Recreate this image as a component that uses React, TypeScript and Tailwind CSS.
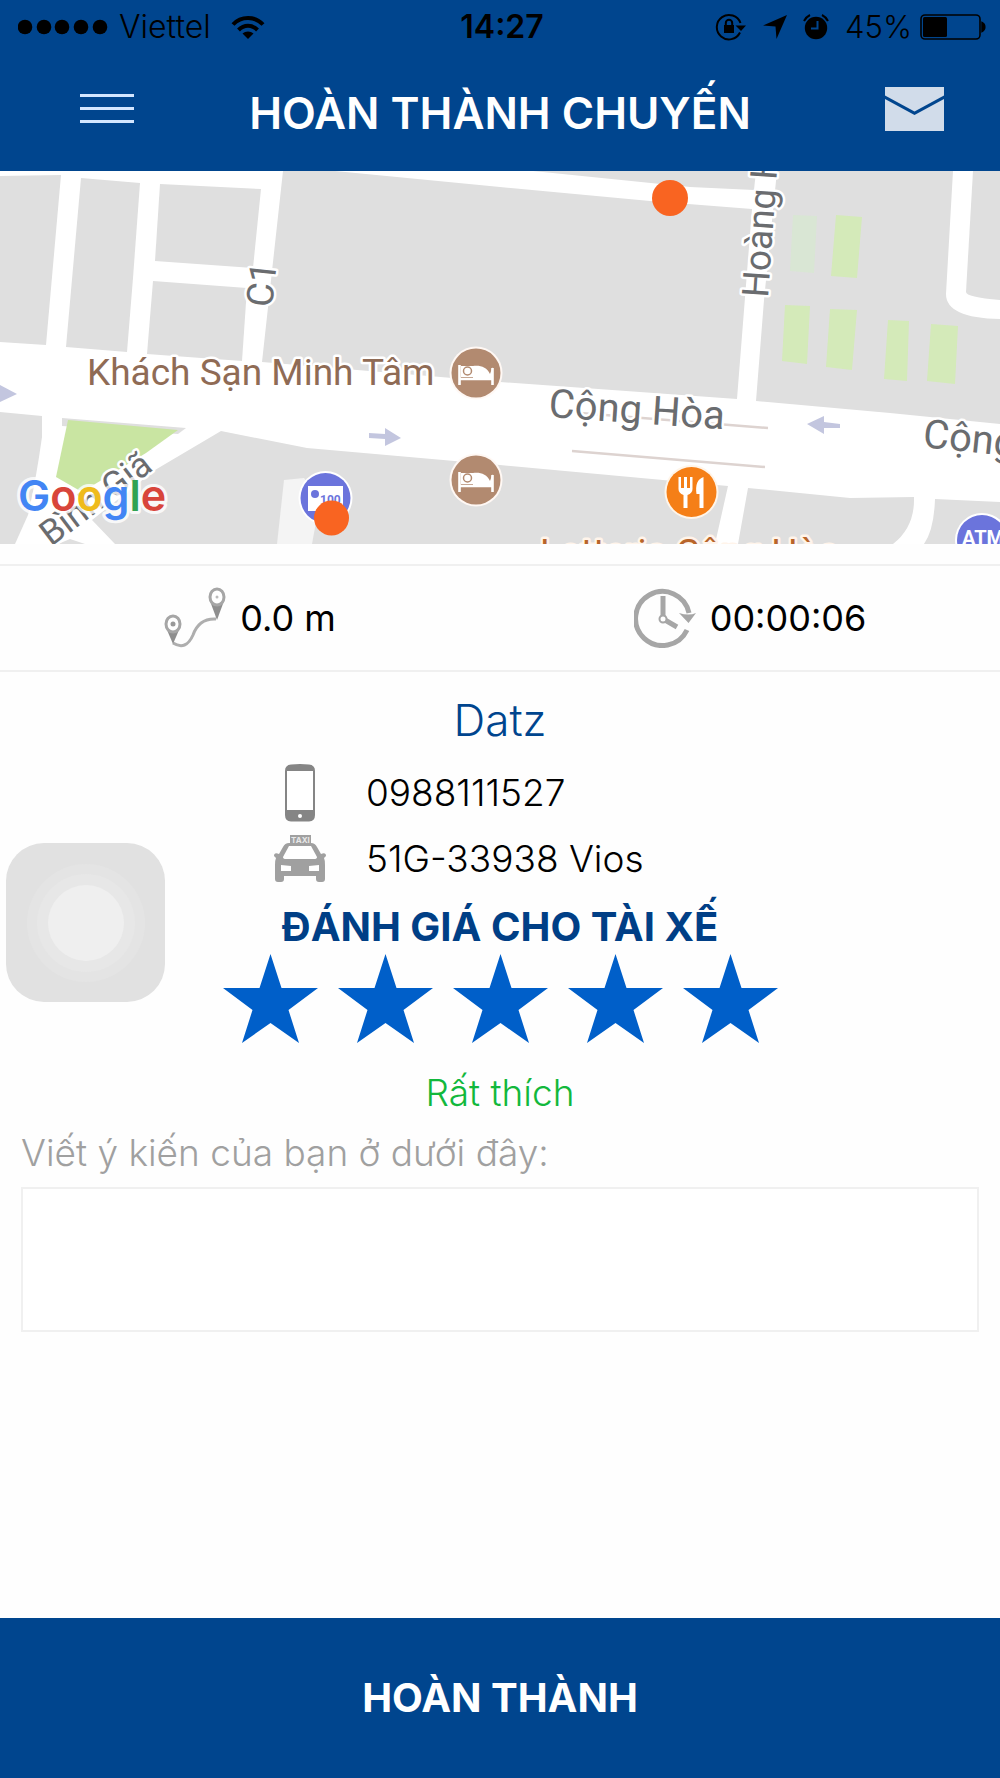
import { useState } from "react";

const SANS = "font-['Inter','Liberation_Sans',sans-serif]";

function StatusBar() {
  return (
    <div className="grid h-[54px] grid-cols-[1fr_auto_1fr] items-center pl-[18px] pr-[14px] text-black">
      <div className="flex items-center">
        <svg className="h-4 w-[90px]" viewBox="0 0 90 16">
          {[7, 26, 44, 63, 82].map((cx) => (
            <circle key={cx} cx={cx} cy="8" r="7.3" />
          ))}
        </svg>
        <span className="ml-[11px] text-[32px] leading-[40px] font-light">Viettel</span>
        <svg className="ml-5 h-6 w-[34px]" viewBox="0 0 34 24" fill="none" stroke="#000" strokeWidth="4">
          <path d="M2 9.5C10 0.8 24 0.8 32 9.5" />
          <path d="M7.5 15C13 9.4 21 9.4 26.5 15" />
          <path d="M11.5 18.6C14.5 15.8 19.500 15.8 22.500 18.6L17 24Z" fill="#000" stroke="none" />
        </svg>
      </div>
      <span className="text-[32px] leading-[40px] font-semibold">14:27</span>
      <div className="flex items-center justify-end">
        <svg className="h-7 w-8" viewBox="0 0 32 28" fill="none" stroke="#000" strokeWidth="2">
          <path d="M25 19.500A12.200 12.200 0 1 1 25.500 10" />
          <path d="M20.500 12.500H31L26 18Z" fill="#000" stroke="none" />
          <rect x="9" y="12" width="10" height="8" fill="#000" stroke="none" />
          <path d="M10.800 12V10a3.200 3.200 0 0 1 6.400 0v2" />
        </svg>
        <svg className="ml-4 h-6 w-6" viewBox="0 0 24 24">
          <path d="M24 0L13.500 24L12.500 11.500L0 10.500Z" />
        </svg>
        <svg className="ml-4 h-7 w-[26px]" viewBox="0 0 26 28">
          <circle cx="13" cy="15" r="11.200" />
          <path d="M1 8A14 14 0 0 1 7 2M25 8A14 14 0 0 0 19 2" fill="none" stroke="#000" strokeWidth="2" />
          <path d="M14.500 8V15.500H8" fill="none" stroke="#00458e" strokeWidth="2" />
        </svg>
        <span className="ml-4 text-[31px] leading-[40px] font-light">45%</span>
        <svg className="ml-2 h-[26px] w-[66px]" viewBox="0 0 66 26">
          <rect x="1" y="1" width="59" height="24" rx="4" fill="none" stroke="#000" strokeWidth="1.600" />
          <rect x="3" y="3" width="24" height="20" rx="1.500" />
          <path d="M62 8.500a5 5 0 0 1 0 9Z" stroke="#000" strokeWidth="1.500" />
        </svg>
      </div>
    </div>
  );
}

function Header() {
  return (
    <div className="grid h-[117px] grid-cols-[1fr_auto_1fr] items-center px-14">
      <button type="button" aria-label="Menu" className="ml-6 flex w-[54px] flex-col gap-[10px] pb-2">
        <span className="h-[3px] bg-[#d3e6ff]" />
        <span className="h-[3px] bg-[#d3e6ff]" />
        <span className="h-[3px] bg-[#d3e6ff]" />
      </button>
      <h1 className="text-[44px] leading-[56px] font-semibold whitespace-nowrap text-white">HOÀN THÀNH CHUYẾN</h1>
      <button type="button" aria-label="Tin nhắn" className="justify-self-end pb-2">
        <svg className="block h-11 w-[59px]" viewBox="0 0 59 44" fill="#d1dcea">
          <path d="M0 0H59V8.500L29.500 24.500L0 8.500Z" />
          <path d="M0 12L29.500 28L59 12V44H0Z" />
        </svg>
      </button>
    </div>
  );
}

function HotelPin({ y }: { y: number }) {
  return (
    <g transform={`translate(476 ${y})`}>
      <circle r="26.500" fill="#fff8f4" />
      <circle r="24.500" fill="#b28a70" />
      <path d="M-16.500 -8V12M16.500 -5V12M-16.500 6H16.500" stroke="#fff" strokeWidth="2.600" fill="none" />
      <rect x="-15" y="-7" width="12" height="11" fill="#fff" />
      <circle cx="-8.500" cy="-2" r="4" fill="#fff" stroke="#b28a70" strokeWidth="1.500" />
      <path d="M-3 -7C4 -8 11 -6 14 1L16.500 -6V6H-3Z" fill="#fff" />
    </g>
  );
}

function RideMap() {
  return (
    <svg
      className="block h-[373px] w-full"
      viewBox="0 171 1000 373"
      preserveAspectRatio="xMidYMid slice"
      role="img"
      aria-label="Bản đồ chuyến đi"
      fontFamily="Roboto, sans-serif"
    >
      <rect x="0" y="171" width="1000" height="373" fill="#fff" />
      <g fill="#dfdfdf">
        <path d="M0 176L61 175L46 345L0 342Z" />
        <path d="M81 178L140 183L133 278L127 352L66 347Z" />
        <path d="M160 184L261 189L253 268L155 261Z" />
        <path d="M153 281L247 288L242 361L147 354Z" />
        <path d="M283 171H335L500 187L650 201L752 209L737 399L640 392L500 382L262 362Z" />
        <path d="M533 171H756L754 190L690 187Z" />
        <path d="M777 171H953L946 294Q946 318 1000 319V424L890 413L756 401L764 300Z" />
        <path d="M973 171H1000V300Q966 297 966 292Z" />
        <path d="M0 412L42 416L42 437Q36 480 28 515L15 544H0Z" />
        <path d="M62 418L186 428L178 434L62 426Z" />
        <path d="M221 431L307 448L500 465L728 486L715 544H115L92 520L155 470Z" />
        <path d="M748 488L850 498L914 497Q915 527 893 544H738Z" />
        <path d="M935 499L1000 502V544H924Q934 530 935 499Z" />
        <path d="M58 544L70 539L85 544Z" />
      </g>
      <path d="M68 420L178 430L146 453L82 492L56 477Z" fill="#c9e5a2" />
      <path d="M284 480L304 478L320 500L312 544H277Z" fill="#f4f4f4" />
      <path d="M793 215L817 216L814 273L790 271Z" fill="#d9e6d4" />
      <g fill="#d4eab9">
        <path d="M836 215L862 217L857 278L831 276Z" />
        <path d="M785 305L810 306L807 364L782 361Z" />
        <path d="M830 309L857 310L852 370L826 367Z" />
        <path d="M888 320L909 321L907 381L884 379Z" />
        <path d="M931 324L958 326L955 384L927 381Z" />
      </g>
      <path d="M580 413L768 428M572 451L765 467" stroke="#ddd3d0" strokeWidth="2.500" />
      <g fill="#c3c6df">
        <path d="M369 433L385 434V428L401 438L385 446V439L369 438Z" />
        <path d="M0 385L17 394L0 402Z" />
        <path d="M807 424L824 416V422L840 424V428L824 428V434Z" />
      </g>
      <g fill="#6a6c6f" stroke="#fff" strokeWidth="5" strokeLinejoin="round" paintOrder="stroke" fontSize="37">
        <text transform="translate(272 308) rotate(-84)">C1</text>
        <text transform="translate(768 298) rotate(-86)">Hoàng Hoa</text>
        <text transform="translate(548 417) rotate(4)" fontSize="40">Cộng Hòa</text>
        <text transform="translate(922 447) rotate(6)" fontSize="40">Cộng</text>
        <text transform="translate(51 547) rotate(-37)" fontSize="35">Bình Giã</text>
      </g>
      <text x="87" y="385" fontSize="37" fill="#8f6b55" stroke="#fff" strokeWidth="5" strokeLinejoin="round" paintOrder="stroke">
        Khách Sạn Minh Tâm
      </text>
      <HotelPin y={373} />
      <HotelPin y={480} />
      <g transform="translate(691.500 492)">
        <circle r="27" fill="#fff5e9" />
        <circle r="25" fill="#f57f17" />
        <path d="M-13 -15V-3Q-13 1 -8 3V16H-4V3Q1 1 1 -3V-15H-1.500V-4H-4.500V-15H-7.500V-4H-10.500V-15Z" fill="#fff" />
        <path d="M12 -15V16H8V2H5Q3 -12 12 -15Z" fill="#fff" />
      </g>
      <text x="540" y="565" fontSize="37" fill="#b8652a" stroke="#fff4ea" strokeWidth="5" strokeLinejoin="round" paintOrder="stroke">
        Lotteria Cộng Hòa
      </text>
      <circle cx="982" cy="540" r="27" fill="#fff" />
      <circle cx="982" cy="540" r="25" fill="#6b74dc" />
      <text x="983" y="545" textAnchor="middle" fontSize="20" fontWeight="700" fill="#fff">
        ATM
      </text>
      <circle cx="325.500" cy="498" r="27" fill="#fff" />
      <circle cx="325.500" cy="498" r="25" fill="#6b74dc" />
      <rect x="308" y="486" width="35" height="25" fill="#fff" />
      <circle cx="315" cy="494" r="4" fill="#6b74dc" />
      <text x="320" y="504" fontSize="12" fontWeight="700" fill="#6b74dc">
        100
      </text>
      <circle cx="331.500" cy="518" r="17.500" fill="#f96421" />
      <circle cx="670" cy="198" r="18" fill="#f96421" />
      <text
        x="18"
        y="511"
        fontFamily="Inter, sans-serif"
        fontSize="43"
        fontWeight="600"
        stroke="#fff"
        strokeOpacity="0.800"
        strokeWidth="6"
        strokeLinejoin="round"
        paintOrder="stroke"
      >
        <tspan fill="#4285f4">G</tspan>
        <tspan fill="#d8453b">o</tspan>
        <tspan fill="#efbb1b">o</tspan>
        <tspan fill="#4285f4">g</tspan>
        <tspan fill="#30a352">l</tspan>
        <tspan fill="#d8453b">e</tspan>
      </text>
    </svg>
  );
}

function RouteIcon() {
  return (
    <svg className="h-[62px] w-[62px]" viewBox="0 0 62 62" fill="none">
      <path d="M9 56Q22 64 29 48Q35 31 52 32" stroke="#aeaeae" strokeWidth="3" />
      <path d="M3 43L9 57L15 43Z" fill="#8e8e8e" />
      <path d="M46 14L53 33L60 14Z" fill="#8e8e8e" />
      <ellipse cx="9" cy="37" rx="7" ry="8" fill="#fff" stroke="#a6a6a6" strokeWidth="3" />
      <ellipse cx="53" cy="10" rx="7" ry="8" fill="#fff" stroke="#a6a6a6" strokeWidth="3" />
      <circle cx="9" cy="37" r="2.500" fill="#999" />
      <circle cx="53" cy="10" r="1.500" fill="#bbb" />
    </svg>
  );
}

function ClockIcon() {
  return (
    <svg className="h-[60px] w-[62px]" viewBox="0 0 62 60" fill="none" stroke="#a6a6a6" strokeWidth="5">
      <path d="M53 42A27 27 0 1 1 55 25" />
      <path d="M45 25Q55 28 62 25L54.500 35Z" fill="#a6a6a6" stroke="none" />
      <path d="M29 8V28M31 32L43 39" />
      <circle cx="29" cy="31" r="3.500" strokeWidth="2" fill="#fff" />
    </svg>
  );
}

function PhoneIcon() {
  return (
    <svg className="h-[58px] w-[30px]" viewBox="0 0 30 58">
      <path d="M6 0.500Q15 -0.500 24 0.500Q30 1 30 7V51Q30 57 24 57.500H6Q0 57 0 51V7Q0 1 6 0.500Z" fill="#858585" />
      <rect x="2" y="7" width="26" height="39" fill="#fff" />
      <circle cx="15" cy="52" r="2" fill="#fff" />
    </svg>
  );
}

function TaxiIcon() {
  return (
    <svg className="h-12 w-[52px]" viewBox="0 0 52 48" fill="#a0a0a0">
      <rect x="16" y="0" width="21" height="9" />
      <text x="26.500" y="7.500" textAnchor="middle" fontSize="8" fontWeight="700" fill="#e8e8e8">
        TAXI
      </text>
      <path d="M15 8H37Q41 8 43 12L47 19Q52 17 52 21L50 23Q51 25 51 30V44Q51 47 48 47H45Q42 47 42 44V41H10V44Q10 47 7 47H4Q1 47 1 44V30Q1 25 2 23L0 21Q0 17 5 19L9 12Q11 8 15 8Z" />
      <path d="M15 11H37L43 22Q43 24 40 24H12Q9 24 9 22Z" fill="#fff" />
      <path d="M7 30L17 31V36H7ZM45 30L35 31V36H45Z" fill="#fff" />
    </svg>
  );
}

function Rating() {
  const [score, setScore] = useState(5);
  return (
    <div className="flex justify-center gap-5">
      {[1, 2, 3, 4, 5].map((n) => (
        <button key={n} type="button" aria-label={`${n} sao`} aria-pressed={n <= score} onClick={() => setScore(n)}>
          <svg className="block h-[89px] w-[95px]" viewBox="0 0 95 89">
            <path
              d="M47.500 0L58.500 34H95L65.500 56L76 89L47.500 69L19 89L29.500 56L0 34H36.500Z"
              fill={n <= score ? "#005fc9" : "#d4d4d4"}
            />
          </svg>
        </button>
      ))}
    </div>
  );
}

export default function App() {
  return (
    <div className={`relative flex min-h-screen flex-col bg-[#fefefe] text-black ${SANS}`}>
      <header className="bg-[#00458e]">
        <StatusBar />
        <Header />
      </header>
      <RideMap />
      <main className="flex flex-1 flex-col">
        <section className="mt-5 grid grid-cols-2 border-y-2 border-[#f0f0f0] text-[36px] leading-[44px]">
          <div className="flex h-[104px] items-center justify-center gap-[14px]">
            <RouteIcon />
            <span>0.0 m</span>
          </div>
          <div className="flex h-[104px] items-center justify-center gap-[14px]">
            <ClockIcon />
            <span>00:00:06</span>
          </div>
        </section>

        <section className="flex flex-col pt-5">
          <h2 className="text-center text-[44px] leading-[56px] font-light text-[#00458e]">Datz</h2>
          <div className="mx-auto mt-3 w-[452px] text-[37px] leading-[44px] font-light">
            <div className="flex h-[66px] items-center gap-10">
              <span className="flex w-[52px] justify-center">
                <PhoneIcon />
              </span>
              <span>0988111527</span>
            </div>
            <div className="flex h-[66px] items-center gap-10">
              <TaxiIcon />
              <span>51G-33938 Vios</span>
            </div>
          </div>
          <h3 className="mt-2 text-center text-[40px] leading-[54px] font-bold text-[#003f86]">ĐÁNH GIÁ CHO TÀI XẾ</h3>
          <Rating />
          <p className="mt-7 text-center text-[37px] leading-[44px] font-light text-[#12b83c]">Rất thích</p>
        </section>

        <section className="flex flex-col px-[21px] pt-4">
          <label htmlFor="comment" className="text-[37px] leading-[44px] font-light text-[#a0a0a0]">
            Viết ý kiến của bạn ở dưới đây:
          </label>
          <textarea
            id="comment"
            className="mt-3 h-[145px] w-full resize-none border-2 border-[#f0f0f0] bg-white p-3 text-[37px] leading-[44px] font-light outline-none"
          />
        </section>
      </main>
      <button type="button" className="h-[160px] w-full bg-[#00458e] text-[40px] leading-[54px] font-bold text-white">
        HOÀN THÀNH
      </button>
      <button
        type="button"
        aria-label="AssistiveTouch"
        className="absolute top-[843px] left-[6px] flex size-[159px] items-center justify-center rounded-[38px] bg-[#e1e1e1]"
      >
        <span className="flex size-[118px] items-center justify-center rounded-full bg-[#e4e4e4]">
          <span className="flex size-[98px] items-center justify-center rounded-full bg-[#e7e7e7]">
            <span className="size-[76px] rounded-full bg-[#efefef]" />
          </span>
        </span>
      </button>
    </div>
  );
}
